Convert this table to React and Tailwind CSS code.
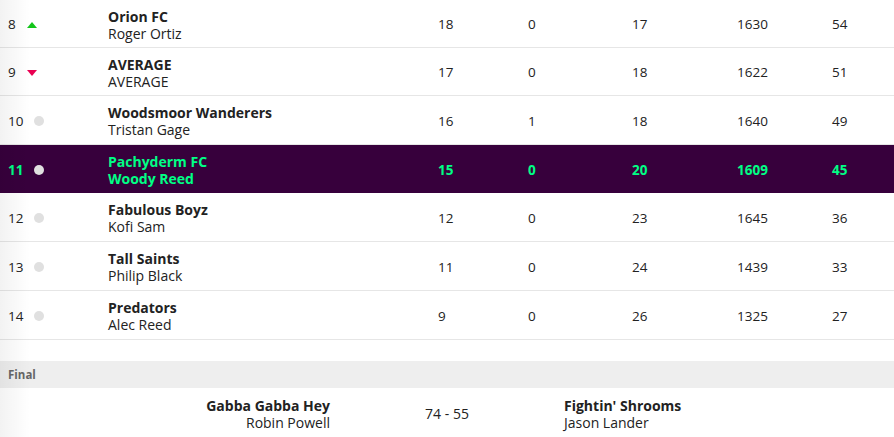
import React from 'react'

const rows = [
  { pos: 8, move: 'up', team: 'Orion FC', owner: 'Roger Ortiz', w: 18, t: 0, l: 17, pf: 1630, pts: 54, h: 'h-[48px]' },
  { pos: 9, move: 'down', team: 'AVERAGE', owner: 'AVERAGE', w: 17, t: 0, l: 18, pf: 1622, pts: 51, h: 'h-[48px]' },
  { pos: 10, move: 'none', team: 'Woodsmoor Wanderers', owner: 'Tristan Gage', w: 16, t: 1, l: 18, pf: 1640, pts: 49, h: 'h-[49px]' },
  { pos: 11, move: 'none', team: 'Pachyderm FC', owner: 'Woody Reed', w: 15, t: 0, l: 20, pf: 1609, pts: 45, me: true, h: 'h-[48px]' },
  { pos: 12, move: 'none', team: 'Fabulous Boyz', owner: 'Kofi Sam', w: 12, t: 0, l: 23, pf: 1645, pts: 36, h: 'h-[49px]' },
  { pos: 13, move: 'none', team: 'Tall Saints', owner: 'Philip Black', w: 11, t: 0, l: 24, pf: 1439, pts: 33, h: 'h-[49px]' },
  { pos: 14, move: 'none', team: 'Predators', owner: 'Alec Reed', w: 9, t: 0, l: 26, pf: 1325, pts: 27, h: 'h-[49px]' },
]

function Movement({ move }) {
  if (move === 'up') {
    return (
      <svg width="10" height="6" viewBox="0 0 10 6" className="ml-px">
        <polygon points="5,0 10,6 0,6" fill="#13c51a" />
      </svg>
    )
  }
  if (move === 'down') {
    return (
      <svg width="10" height="6" viewBox="0 0 10 6" className="ml-px">
        <polygon points="0,0 10,0 5,6" fill="#e90052" />
      </svg>
    )
  }
  return <span className="ml-[8px] block h-[10px] w-[10px] rounded-full bg-[#e0e0e0]" />
}

function Row({ r }) {
  const base = r.me
    ? 'bg-[#37003c] text-[#00ff85] font-bold'
    : 'bg-white text-[#222] border-b border-[#e6e6e6]'
  return (
    <div className={`flex items-center pt-[2px] text-[13.5px] ${r.h} ${base}`}>
      <div className="flex w-[108px] items-center pl-2">
        <span className="w-[18px]">{r.pos}</span>
        <Movement move={r.move} />
      </div>
      <div className="flex w-[330px] flex-col leading-[17px] text-[14px]">
        <span className="font-bold">{r.team}</span>
        <span>{r.owner}</span>
      </div>
      <div className="w-[90px]">{r.w}</div>
      <div className="w-[104px]">{r.t}</div>
      <div className="w-[105px]">{r.l}</div>
      <div className="w-[95px]">{r.pf}</div>
      <div className="flex-1">{r.pts}</div>
    </div>
  )
}

export default function App() {
  return (
    <div className="relative h-[437px] w-[894px] overflow-hidden bg-white" style={{ fontFamily: '"Open Sans", Lato, sans-serif' }}>
      {/* table */}
      <div>
        {rows.map((r) => (
          <Row key={r.pos} r={r} />
        ))}
      </div>

      <div className="h-[21px]" />

      {/* results */}
      <div className="flex h-[27px] items-center bg-[#eeeeee] pl-2 text-[11.5px] font-bold text-[#666]">Final</div>
      <div className="flex h-[49px] items-center pt-[2px] text-[#222]">
        <div className="flex w-[330px] flex-col items-end leading-[17px] text-[14px]">
          <span className="font-bold">Gabba Gabba Hey</span>
          <span>Robin Powell</span>
        </div>
        <div className="w-[234px] text-center text-[14px]">74 - 55</div>
        <div className="flex flex-col leading-[17px] text-[14px]">
          <span className="font-bold">Fightin' Shrooms</span>
          <span>Jason Lander</span>
        </div>
      </div>

      {/* left edge shade */}
      <div className="pointer-events-none absolute inset-y-0 left-0 w-[30px] bg-gradient-to-r from-black/[0.05] to-transparent" />
    </div>
  )
}
